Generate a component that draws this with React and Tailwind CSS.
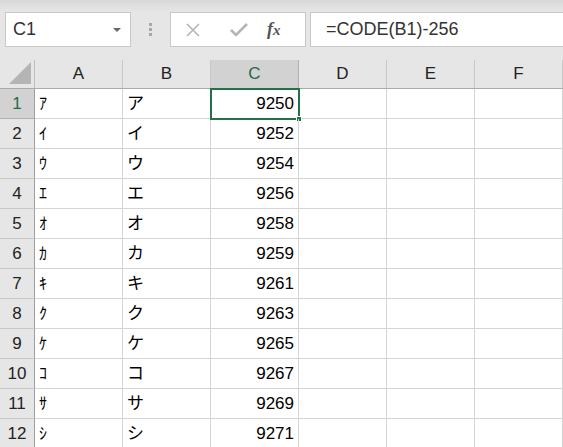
const cols = ['A', 'B', 'C', 'D', 'E', 'F']

const rows = [
  ['ｱ', 'ア', 9250],
  ['ｲ', 'イ', 9252],
  ['ｳ', 'ウ', 9254],
  ['ｴ', 'エ', 9256],
  ['ｵ', 'オ', 9258],
  ['ｶ', 'カ', 9259],
  ['ｷ', 'キ', 9261],
  ['ｸ', 'ク', 9263],
  ['ｹ', 'ケ', 9265],
  ['ｺ', 'コ', 9267],
  ['ｻ', 'サ', 9269],
  ['ｼ', 'シ', 9271],
]

const font = { fontFamily: '"Liberation Sans", "Noto Sans CJK JP", sans-serif' }

const Toolbar = () => (
  <div className="h-[60px] flex items-start pt-[12px] bg-gradient-to-b from-[#d8d8d8] via-[#e6e6e6] via-[20%] to-[#e6e6e6]">
    <div className="ml-[5px] w-[126px] h-[35px] bg-white border border-[#c8c8c8] flex items-center justify-between pl-[7px] pr-[9px]">
      <span className="text-[18px] text-[#333]">C1</span>
      <div className="w-0 h-0 border-l-[4px] border-r-[4px] border-t-[4px] border-l-transparent border-r-transparent border-t-[#666]" />
    </div>
    <div className="w-[39px] h-[35px] flex flex-col items-center justify-center gap-[2px]">
      <div className="w-[3px] h-[3px] bg-[#a8a8a8]" />
      <div className="w-[3px] h-[3px] bg-[#a8a8a8]" />
      <div className="w-[3px] h-[3px] bg-[#a8a8a8]" />
    </div>
    <div className="w-[136px] h-[35px] bg-white border border-[#c8c8c8] flex items-center">
      <svg width="16" height="16" viewBox="0 0 16 16" className="ml-[14px]">
        <path d="M2 2 L14 14 M14 2 L2 14" stroke="#b4b4b4" strokeWidth="1.6" fill="none" />
      </svg>
      <svg width="20" height="16" viewBox="0 0 20 16" className="ml-[28px]">
        <path d="M2 8 L7 13 L18 2" stroke="#b4b4b4" strokeWidth="2.6" fill="none" />
      </svg>
      <span
        className="ml-[18px] text-[18px] italic text-[#555] font-bold"
        style={{ fontFamily: '"Liberation Serif", serif' }}
      >
        f<span className="text-[15px]">x</span>
      </span>
    </div>
    <div className="ml-[4px] flex-1 h-[35px] bg-white border-y border-l border-[#c8c8c8] flex items-center pl-[15px]">
      <span className="text-[18px] text-[#333]">=CODE(B1)-256</span>
    </div>
  </div>
)

const Header = () => (
  <div className="flex h-[29px] bg-[#e6e6e6] border-b border-[#ababab]">
    <div className="w-[35px] shrink-0 border-r border-[#bdbdbd] relative">
      <div className="absolute right-[3px] bottom-[3px] w-0 h-0 border-l-[21px] border-t-[21px] border-l-transparent border-t-transparent border-b-0 border-r-[0px]">
      </div>
      <svg width="24" height="24" viewBox="0 0 24 24" className="absolute right-[2px] bottom-[3px]">
        <path d="M23 1 L23 23 L1 23 Z" fill="#b4b4b4" />
      </svg>
    </div>
    {cols.map((c) => (
      <div
        key={c}
        className={`w-[88px] shrink-0 border-r flex items-center justify-center text-[17px] ${
          c === 'C'
            ? 'bg-[#d2d2d2] text-[#1e6b44] border-[#b0b0b0]'
            : 'text-[#222] border-[#c8c8c8]'
        }`}
      >
        {c}
      </div>
    ))}
  </div>
)

const Row = ({ n, a, b, v }) => (
  <div className="flex h-[30px]">
    <div
      className={`w-[35px] shrink-0 border-r border-r-[#9e9e9e] border-b flex items-center justify-center text-[17px] ${
        n === 1
          ? 'bg-[#d2d2d2] text-[#1e6b44] border-b-[#b0b0b0]'
          : 'bg-[#e6e6e6] text-[#222] border-b-[#c8c8c8]'
      }`}
    >
      {n}
    </div>
    <div className="w-[88px] shrink-0 border-r border-b border-[#d4d4d4] flex items-center pl-[4px] text-[16px] text-black">
      {a}
    </div>
    <div className="w-[88px] shrink-0 border-r border-b border-[#d4d4d4] flex items-center pl-[4px] text-[17px] text-black">
      {b}
    </div>
    <div className="w-[88px] shrink-0 border-r border-b border-[#d4d4d4] flex items-center justify-end pr-[4px] text-[17px] text-black relative">
      {v}
      {n === 1 && (
        <>
          <div className="absolute -left-[1px] -top-[1px] w-[90px] h-[32px] border-2 border-[#217346] pointer-events-none" />
          <div className="absolute -right-[4px] -bottom-[4px] w-[6px] h-[6px] bg-[#217346] border border-white" />
        </>
      )}
    </div>
    {[0, 1, 2].map((i) => (
      <div key={i} className="w-[88px] shrink-0 border-r border-b border-[#d4d4d4]" />
    ))}
  </div>
)

export default function App() {
  return (
    <div className="w-[563px] h-[447px] overflow-hidden bg-white" style={font}>
      <Toolbar />
      <Header />
      {rows.map(([a, b, v], i) => (
        <Row key={i} n={i + 1} a={a} b={b} v={v} />
      ))}
    </div>
  )
}
